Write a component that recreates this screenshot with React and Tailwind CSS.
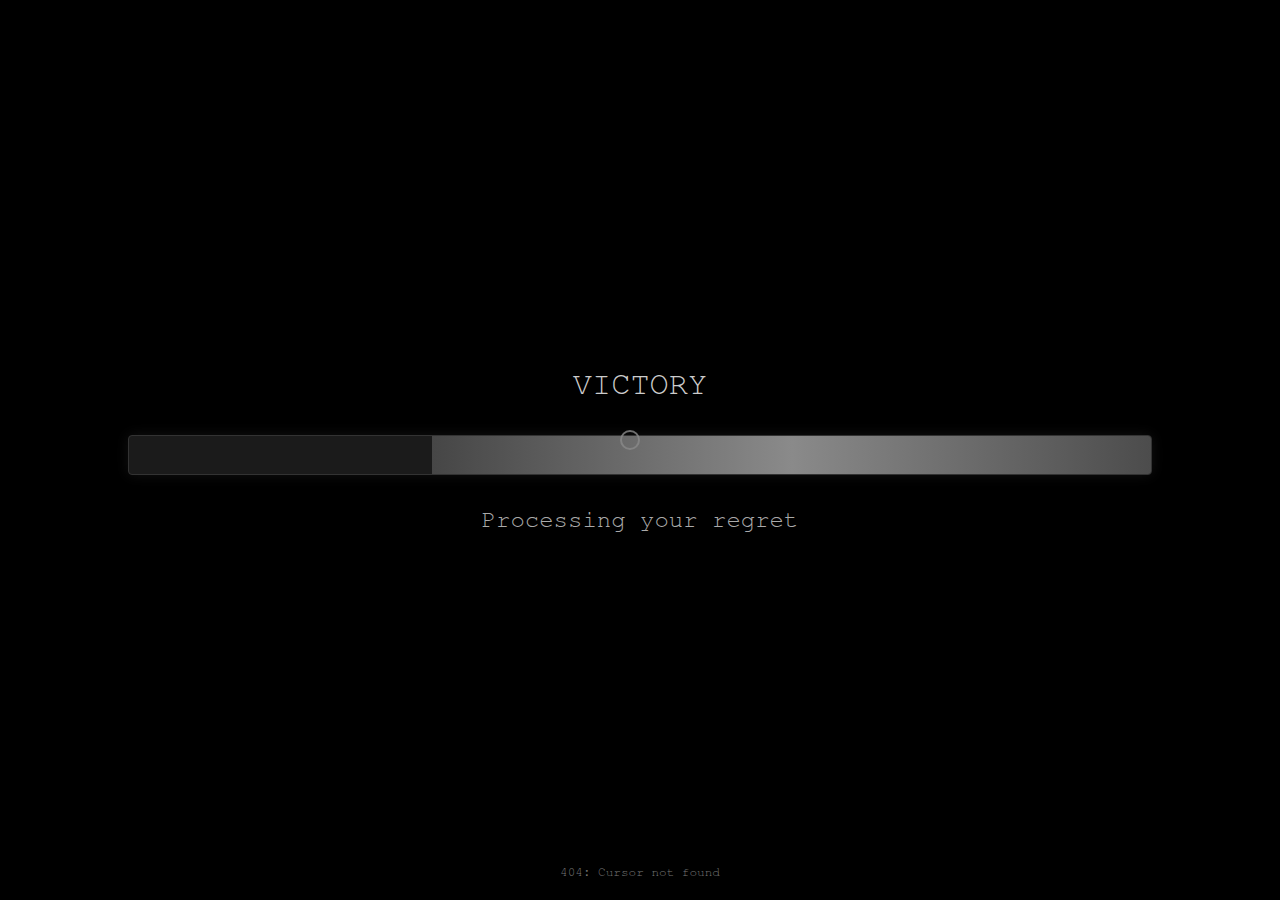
const mono = "font-['FreeMono','Courier_New',monospace]";

const App = () => {
  return (
    <div className={`relative flex h-screen w-full flex-col items-center justify-center bg-black ${mono}`}>
      {/* title */}
      <h1 className="mb-[35px] text-[32px] leading-none text-[#cccccc]">VICTORY</h1>

      {/* progress bar */}
      <div className="flex h-[40px] w-[1024px] overflow-hidden rounded-[4px] border border-[#333333] bg-[#1b1b1b] shadow-[0_0_14px_rgba(255,255,255,0.07)]">
        <div className="w-[303px]" />
        <div className="flex-1 bg-[linear-gradient(90deg,#464646,#8a8a8a,#4c4c4c)]" />
      </div>

      <p className="mt-[33px] text-[24px] leading-none text-[#aaaaaa]">Processing your regret</p>

      {/* fake cursor */}
      <div className="fixed left-[620px] top-[430px] h-[20px] w-[20px] rounded-full border-2 border-[#8a8a8a]/80" />

      <footer className="absolute bottom-[20px] left-0 right-0 text-center text-[12.7px] leading-none text-[#777777]">
        404: Cursor not found
      </footer>
    </div>
  );
};

export default App;
